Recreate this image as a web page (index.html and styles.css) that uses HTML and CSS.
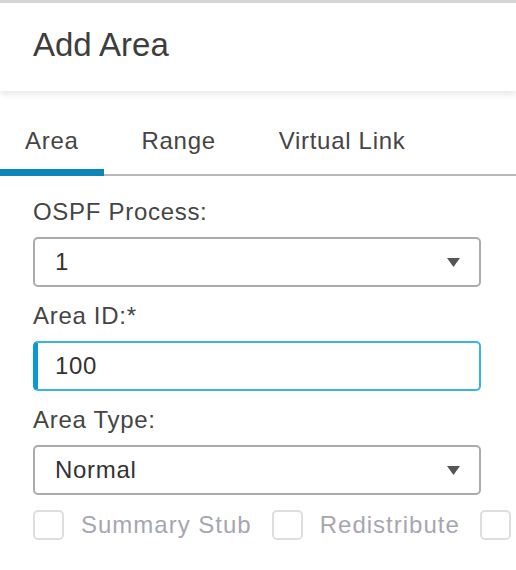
FILE: index.html
```html
<!DOCTYPE html>
<html>
<head>
<meta charset="utf-8">
<link rel="stylesheet" href="styles.css">
</head>
<body>
<div class="header"><h1 class="title">Add Area</h1></div>
<div class="tabs">
  <div class="tab active">Area</div>
  <div class="tab">Range</div>
  <div class="tab">Virtual Link</div>
</div>
<div class="form">
  <div class="field">
    <div class="label">OSPF Process:</div>
    <div class="select"><span class="value">1</span><svg class="caret" width="13" height="9" viewBox="0 0 13 9"><polygon points="0,0 13,0 6.5,9" fill="#555"/></svg></div>
  </div>
  <div class="field">
    <div class="label">Area ID:*</div>
    <div class="input"><span class="value">100</span></div>
  </div>
  <div class="field">
    <div class="label">Area Type:</div>
    <div class="select"><span class="value">Normal</span><svg class="caret" width="13" height="9" viewBox="0 0 13 9"><polygon points="0,0 13,0 6.5,9" fill="#555"/></svg></div>
  </div>
  <div class="checks">
    <span class="box"></span><span class="check-label">Summary Stub</span>
    <span class="box"></span><span class="check-label">Redistribute</span>
    <span class="box"></span>
  </div>
</div>
</body>
</html>
```
FILE: styles.css
```css
html, body {
  margin: 0;
  padding: 0;
  background: #fff;
  overflow: hidden;
}
body {
  font-family: "Liberation Sans", Arial, sans-serif;
  color: #444;
  width: 516px;
  height: 570px;
}
.header {
  border-top: 3px solid #d4d4d4;
  height: 88px;
  background: #fff;
  box-shadow: 0 3px 7px rgba(0, 0, 0, 0.10);
  position: relative;
  z-index: 1;
}
.title {
  margin: 0;
  padding: 22px 0 0 33px;
  font-size: 33px;
  line-height: 40px;
  font-weight: normal;
  color: #3d3d3d;
}
.tabs {
  display: flex;
  gap: 13px;
  padding-top: 36px;
  border-bottom: 2px solid #b9b9b9;
}
.tab {
  font-size: 24px;
  letter-spacing: 0.7px;
  line-height: 28px;
  padding: 0 25px 14px 25px;
  border-bottom: 7px solid transparent;
  color: #454545;
  margin-bottom: -2px;
}
.tab.active {
  border-bottom-color: #0b86b6;
}
.form {
  padding: 22px 35px 0 33px;
  display: flex;
  flex-direction: column;
  overflow: hidden;
}
.field {
  display: flex;
  flex-direction: column;
  margin-bottom: 15px;
}
.field:last-of-type {
  margin-bottom: 7px;
}
.label {
  font-size: 24px;
  letter-spacing: 0.7px;
  line-height: 28px;
  color: #454545;
  margin-bottom: 11px;
}
.select, .input {
  height: 50px;
  box-sizing: border-box;
  border-radius: 5px;
  display: flex;
  align-items: center;
  font-size: 24px;
  letter-spacing: 0.7px;
  color: #333;
}
.select {
  border: 2px solid #ababab;
  padding: 0 19px 0 20px;
  justify-content: space-between;
}
.input {
  border: 2px solid #3ab4e6;
  border-left: 5px solid #0b98d3;
  padding-left: 17px;
}
.caret {
  display: block;
}
.checks {
  display: flex;
  align-items: center;
  white-space: nowrap;
  margin-right: -35px;
}
.box {
  width: 31px;
  height: 30px;
  box-sizing: border-box;
  border: 2px solid #dedede;
  border-radius: 5px;
  flex: none;
}
.check-label {
  flex: none;
  font-size: 24px;
  letter-spacing: 1px;
  line-height: 28px;
  color: #a6a6b0;
  margin: 0 20px 0 17px;
}
```
